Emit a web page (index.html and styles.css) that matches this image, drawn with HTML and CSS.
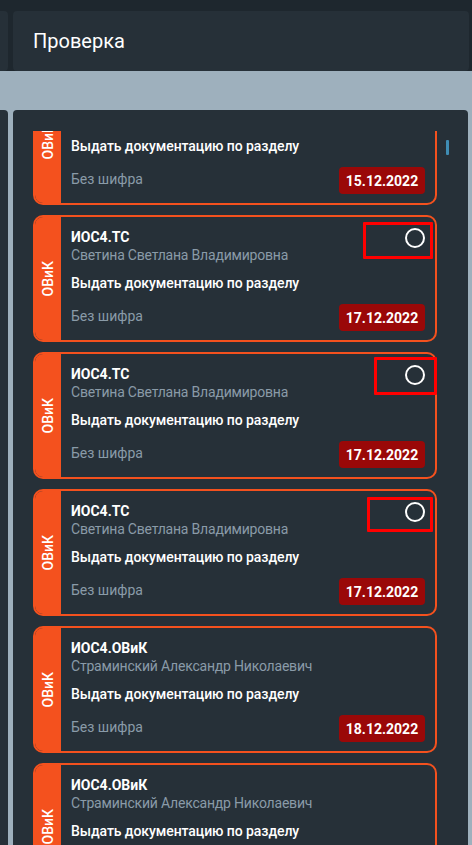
FILE: index.html
```html
<!DOCTYPE html>
<html lang="ru">
<head>
<meta charset="utf-8">
<title>Проверка</title>
<link rel="stylesheet" href="styles.css">
</head>
<body>
<div class="top-row">
  <div class="side-stub"></div>
  <div class="header-panel"><h1 class="title">Проверка</h1></div>
</div>
<div class="content-row">
  <div class="side-stub side-stub--tall"></div>
  <div class="content-panel">
    <div class="scroll-thumb"></div>
    <div class="list">
      <div class="list-inner">
        <div class="card">
          <div class="tab"><span class="tab-text">ОВиК</span></div>
          <div class="body">
            <div class="code">ИОС4.ТС</div>
            <div class="person">Светина Светлана Владимировна</div>
            <div class="task">Выдать документацию по разделу</div>
            <div class="bottom"><span class="cipher">Без шифра</span><span class="date">15.12.2022</span></div>
          </div>
        </div>
        <div class="card">
          <div class="tab"><span class="tab-text">ОВиК</span></div>
          <div class="body">
            <div class="code">ИОС4.ТС</div>
            <div class="person">Светина Светлана Владимировна</div>
            <div class="task">Выдать документацию по разделу</div>
            <div class="bottom"><span class="cipher">Без шифра</span><span class="date">17.12.2022</span></div>
          </div>
          <span class="radio"></span>
          <span class="mark mark--a"></span>
        </div>
        <div class="card">
          <div class="tab"><span class="tab-text">ОВиК</span></div>
          <div class="body">
            <div class="code">ИОС4.ТС</div>
            <div class="person">Светина Светлана Владимировна</div>
            <div class="task">Выдать документацию по разделу</div>
            <div class="bottom"><span class="cipher">Без шифра</span><span class="date">17.12.2022</span></div>
          </div>
          <span class="radio"></span>
          <span class="mark mark--b"></span>
        </div>
        <div class="card">
          <div class="tab"><span class="tab-text">ОВиК</span></div>
          <div class="body">
            <div class="code">ИОС4.ТС</div>
            <div class="person">Светина Светлана Владимировна</div>
            <div class="task">Выдать документацию по разделу</div>
            <div class="bottom"><span class="cipher">Без шифра</span><span class="date">17.12.2022</span></div>
          </div>
          <span class="radio"></span>
          <span class="mark mark--c"></span>
        </div>
        <div class="card">
          <div class="tab"><span class="tab-text">ОВиК</span></div>
          <div class="body">
            <div class="code">ИОС4.ОВиК</div>
            <div class="person">Страминский Александр Николаевич</div>
            <div class="task">Выдать документацию по разделу</div>
            <div class="bottom"><span class="cipher">Без шифра</span><span class="date">18.12.2022</span></div>
          </div>
        </div>
        <div class="card">
          <div class="tab"><span class="tab-text">ОВиК</span></div>
          <div class="body">
            <div class="code">ИОС4.ОВиК</div>
            <div class="person">Страминский Александр Николаевич</div>
            <div class="task">Выдать документацию по разделу</div>
            <div class="bottom"><span class="cipher">Без шифра</span><span class="date">18.12.2022</span></div>
          </div>
        </div>
      </div>
    </div>
  </div>
</div>
</body>
</html>
```
FILE: styles.css
```css
* { box-sizing: border-box; }
html, body { margin: 0; padding: 0; }
body {
  width: 472px;
  height: 845px;
  overflow: hidden;
  background: #9eb0bd;
  font-family: Roboto, "Liberation Sans", sans-serif;
  color: #ffffff;
}
.top-row {
  display: flex;
  gap: 5px;
  height: 71px;
  padding: 11px 3px 0 0;
  background: #1e272e;
}
.side-stub {
  width: 8px;
  height: 60px;
  background: #263038;
  border-radius: 0 4px 4px 0;
  flex: none;
}
.side-stub--tall { height: 760px; }
.header-panel {
  flex: 1;
  height: 60px;
  background: #263038;
  border-radius: 4px;
  display: flex;
  align-items: center;
  padding-left: 20px;
}
.title {
  margin: 0;
  font-size: 20px;
  font-weight: 400;
  line-height: 24px;
}
.content-row {
  display: flex;
  gap: 5px;
  margin-top: 39px;
  padding-right: 4px;
}
.content-panel {
  flex: 1;
  position: relative;
  background: #263038;
  border-radius: 4px 4px 0 0;
  height: 760px;
  padding: 21px 0 0 20px;
}
.scroll-thumb {
  position: absolute;
  left: 433px;
  top: 30px;
  width: 3px;
  height: 15px;
  background: #3f8db4;
  border-radius: 1px;
}
.list {
  width: 404px;
  height: 714px;
  overflow: hidden;
}
.list-inner {
  display: flex;
  flex-direction: column;
  gap: 10px;
  margin-top: -53px;
}
.card {
  position: relative;
  display: flex;
  height: 127px;
  border: 2px solid #f4511e;
  border-radius: 10px;
  flex: none;
}
.tab {
  width: 26px;
  flex: none;
  background: #f4511e;
  border-radius: 8px 0 0 8px;
  display: flex;
  align-items: center;
  justify-content: center;
}
.tab-text {
  writing-mode: vertical-rl;
  transform: rotate(180deg);
  font-size: 14px;
  font-weight: 500;
  line-height: 16px;
  color: #ffffff;
}
.body {
  flex: 1;
  padding: 11px 10px 9px 10px;
  display: flex;
  flex-direction: column;
}
.code {
  font-size: 14px;
  font-weight: 700;
  line-height: 18px;
  color: #ffffff;
}
.person {
  font-size: 14px;
  line-height: 18px;
  letter-spacing: -0.2px;
  color: #8a9ba8;
}
.task {
  margin-top: 10px;
  font-size: 14px;
  font-weight: 500;
  line-height: 18px;
  letter-spacing: -0.07px;
  color: #ffffff;
}
.bottom {
  margin-top: 12px;
  display: flex;
  align-items: center;
  justify-content: space-between;
  height: 27px;
}
.cipher {
  font-size: 14px;
  line-height: 18px;
  color: #8a9ba8;
  position: relative;
  top: -2px;
}
.date {
  background: #9a0808;
  border-radius: 4px;
  height: 27px;
  width: 86px;
  display: flex;
  align-items: center;
  justify-content: center;
  font-size: 14px;
  font-weight: 700;
  color: #ffffff;
}
.radio {
  position: absolute;
  left: 370px;
  top: 11px;
  width: 20px;
  height: 20px;
  border: 2px solid #ffffff;
  border-radius: 50%;
}
.mark {
  position: absolute;
  border: 3px solid #ff0000;
  border-radius: 1px;
}
.mark--a { left: 328px; top: 5px; width: 70px; height: 37px; }
.mark--b { left: 339px; top: 3px; width: 63px; height: 38px; }
.mark--c { left: 332px; top: 6px; width: 66px; height: 35px; }
```
